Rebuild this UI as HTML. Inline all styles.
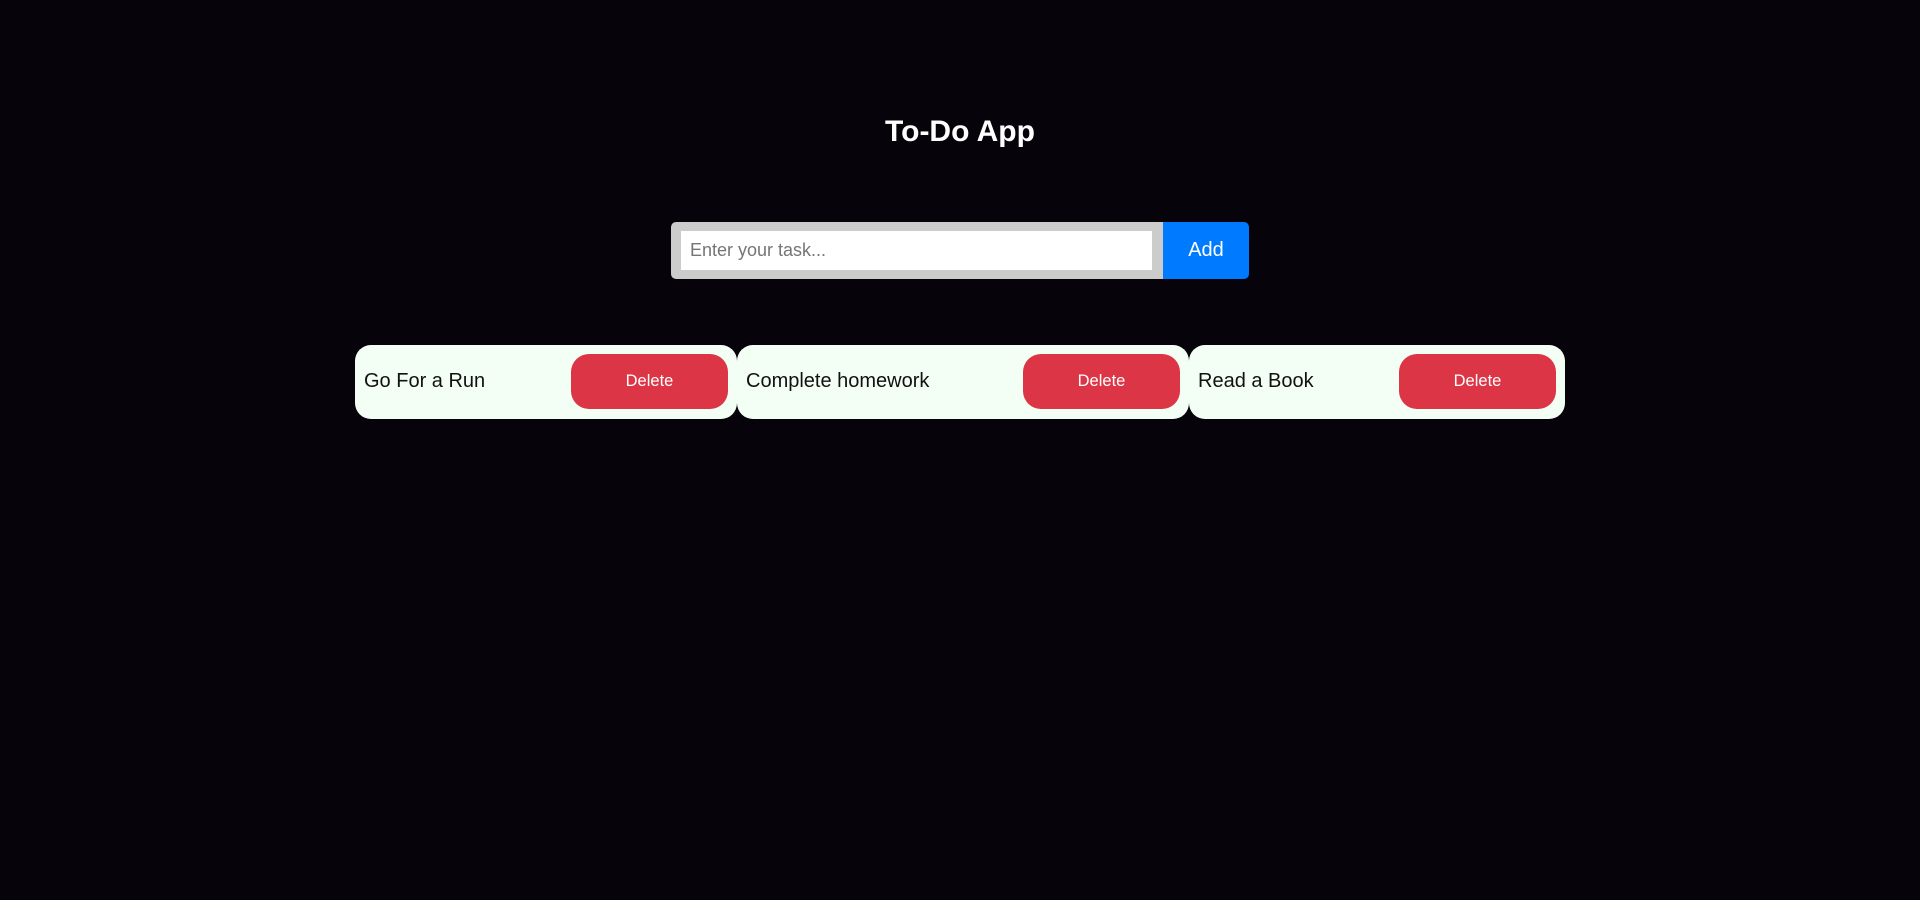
<!DOCTYPE html>
<html><head><style>
body{margin:0;width:1920px;height:900px;background:#06030b;font-family:"Liberation Sans",Arial,sans-serif;position:relative;overflow:hidden}
h1{position:absolute;top:112px;left:0;width:1920px;margin:0;text-align:center;color:#fff;font-size:30px;font-weight:bold;line-height:40px}
.box{position:absolute;left:671px;top:222px;width:492px;height:57px;background:#ccc;border-radius:5px 0 0 5px}
.inp{position:absolute;left:10px;top:9px;width:471px;height:39px;background:#fff;color:#757575;font-size:18px;line-height:39px;padding-left:9px;box-sizing:border-box}
.add{position:absolute;left:1163px;top:222px;width:86px;height:57px;background:#007bff;color:#fff;font-size:20px;line-height:57px;text-align:center;border-radius:0 5px 5px 0}
.card{position:absolute;top:345px;height:74px;background:#f3fff4;border-radius:16px}
.card span{position:absolute;left:9px;top:0;line-height:72px;font-size:20px;color:#111}
.del{position:absolute;right:9px;top:9px;width:157px;height:55px;background:#dc3545;border-radius:18px;color:#fff;font-size:16.5px;line-height:55px;text-align:center}
</style></head><body>
<h1>To-Do App</h1>
<div class="box"><div class="inp">Enter your task...</div></div>
<div class="add">Add</div>
<div class="card" style="left:355px;width:382px"><span>Go For a Run</span><div class="del">Delete</div></div>
<div class="card" style="left:737px;width:452px"><span>Complete homework</span><div class="del">Delete</div></div>
<div class="card" style="left:1189px;width:376px"><span>Read a Book</span><div class="del">Delete</div></div>
</body></html>
